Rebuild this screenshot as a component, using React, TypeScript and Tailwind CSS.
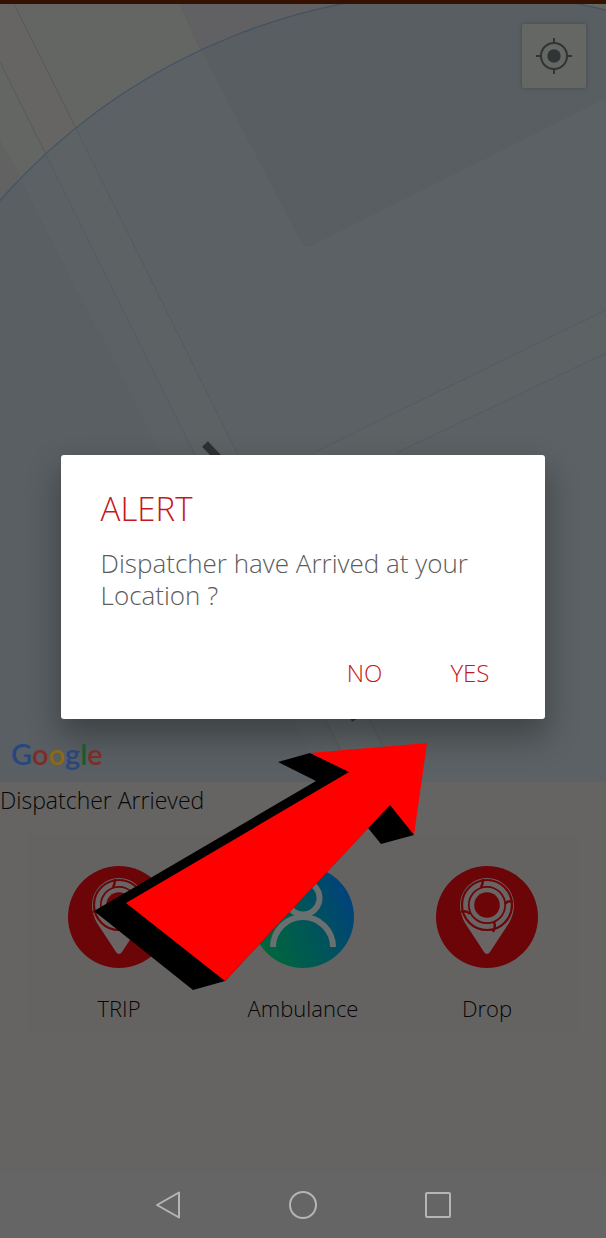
import type { ReactNode } from "react";

function MapCanvas() {
  return (
    <svg
      className="absolute inset-0 h-full w-full"
      viewBox="0 4 606 778"
      preserveAspectRatio="xMidYMin slice"
      aria-hidden="true"
    >
      <defs>
        <clipPath id="zone">
          <circle cx="460" cy="605" r="612.5" />
        </clipPath>
      </defs>
      <rect y="4" width="606" height="778" fill="#646663" />
      <path d="M180 4L201 50L380 4Z" fill="#616163" />
      <path d="M0 4H14L77 129L46 153L0 62Z" fill="#666564" />
      <path d="M0 140L20 175L0 210Z" fill="#636262" />
      <g clipPath="url(#zone)">
        <rect y="4" width="606" height="778" fill="#5b6164" />
        <path d="M0 140L148 428L325 782H0Z" fill="#595f63" />
        <path d="M180 4L201 50L301 242Q305 250 313 245L606 98V4Z" fill="#595e62" />
        <path d="M0 62L191 447L356 782H400L237 453L14 4H0Z" fill="#5d6365" />
        <path d="M606 310L313 453L200 510L290 510L398 452L606 353Z" fill="#5d6365" />
      </g>
      <g fill="none" stroke="#565b5d" strokeWidth="1">
        <path d="M0 62L191 447L356 782" />
        <path d="M14 4L237 453L400 782" />
        <path d="M606 310L313 453" />
        <path d="M606 353L398 452" />
      </g>
      <path d="M180 4L201 50" stroke="#5f5f60" />
      <circle cx="460" cy="605" r="612.5" fill="none" stroke="#435363" strokeWidth="1.3" />
      <path d="M205 444L222 462" stroke="#2d3132" strokeWidth="8" />
      <path d="M351 720L359 715" stroke="#2d3132" strokeWidth="4" />
    </svg>
  );
}

function LocateIcon() {
  return (
    <svg className="h-9 w-9" viewBox="0 0 36 36" fill="none" stroke="#303434" strokeWidth="2" aria-hidden="true">
      <circle cx="18" cy="18" r="13" />
      <circle cx="18" cy="18" r="6.7" fill="#303434" stroke="none" />
      <path d="M18 0V5M18 31V36M0 18H5M31 18H36" />
    </svg>
  );
}

function PinIcon() {
  return (
    <svg className="h-[102px] w-[102px]" viewBox="0 0 102 102" aria-hidden="true">
      <circle cx="51" cy="51" r="51" fill="#6b0507" />
      <path d="M24 39A27 27 0 0 1 78 39Q78 48 73 57L54 86Q51 90 48 86L29 57Q24 48 24 39Z" fill="#6a6464" />
      <g fill="none" stroke="#6b0507">
        <circle cx="51" cy="39" r="25" strokeWidth="2.2" />
        <circle cx="51" cy="39" r="18.2" strokeWidth="1.7" />
        <path
          strokeWidth="2.4"
          d="M47 13Q47 18 45 21.500M77 36Q72 34 69 38M57 66Q60 61 58 56M25 46Q30 44 34 48"
        />
      </g>
      <circle cx="51" cy="39" r="12.8" fill="#6b0507" />
    </svg>
  );
}

function PersonIcon() {
  return (
    <svg className="h-[102px] w-[102px]" viewBox="0 0 102 102" aria-hidden="true">
      <defs>
        <linearGradient id="person" x1="0" y1="0.8" x2="1" y2="0.35">
          <stop offset="0.1" stopColor="#00663d" />
          <stop offset="0.55" stopColor="#005558" />
          <stop offset="1" stopColor="#00427c" />
        </linearGradient>
      </defs>
      <circle cx="51" cy="51" r="51" fill="url(#person)" />
      <g fill="none" stroke="#6a6f6f" strokeWidth="6">
        <circle cx="51" cy="32" r="16.5" />
        <path d="M21 81A30 30 0 0 1 81 81" />
      </g>
    </svg>
  );
}

function Action({ icon, label }: { icon: ReactNode; label: string }) {
  return (
    <button type="button" className="flex flex-1 flex-col items-center gap-6 text-[22px] leading-8">
      {icon}
      <span>{label}</span>
    </button>
  );
}

function Arrow() {
  return (
    <svg
      className="pointer-events-none absolute left-[94px] top-[743px] z-20 h-[247px] w-[333px]"
      viewBox="94 743 333 247"
      aria-hidden="true"
    >
      <path d="M310 753L278 762L316 781L94 911L193 990L225 981L368 828L381 844L414 835L390 790Z" fill="#000" />
      <path d="M427 743L310 753L349 772L126 903L225 981L390 805L414 835Z" fill="#f00" />
    </svg>
  );
}

export default function App() {
  return (
    <div className="relative flex min-h-screen flex-col bg-[#656463] font-['Open_Sans','Noto_Sans',sans-serif] font-[340] text-[#060606]">
      <div className="h-1 bg-[#351100]" />

      <main className="flex flex-1 flex-col">
        <section aria-label="Map" className="relative flex flex-1 flex-col justify-between overflow-hidden bg-[#5b6164]">
          <MapCanvas />
          <button
            type="button"
            aria-label="My location"
            className="relative mr-5 mt-5 flex h-16 w-16 items-center justify-center self-end rounded-xs bg-[#656764] shadow-[0_0_4px_#45494b]"
          >
            <LocateIcon />
          </button>
          <div className="relative z-20 px-[11px] pb-2 font-['Lato',sans-serif] text-[29px] font-semibold leading-10">
            <span className="text-[#28467f]">G</span>
            <span className="text-[#7c2d28]">o</span>
            <span className="text-[#8a6a14]">o</span>
            <span className="text-[#28467f]">g</span>
            <span className="text-[#1b5a2e]">l</span>
            <span className="text-[#7c2d28]">e</span>
          </div>
        </section>

        <section className="pb-[142px]">
          <p className="text-[23px] leading-9">Dispatcher Arrieved</p>
          <div className="mx-[27px] mt-4 flex bg-[#656361] pb-2 pt-8">
            <Action icon={<PinIcon />} label="TRIP" />
            <Action icon={<PersonIcon />} label="Ambulance" />
            <Action icon={<PinIcon />} label="Drop" />
          </div>
        </section>
      </main>

      <nav aria-label="System" className="flex h-16 items-center justify-center gap-[105px] bg-[#656565]">
        <button type="button" aria-label="Back">
          <svg className="h-[30px] w-[30px]" viewBox="0 0 30 30" fill="none" stroke="#b5b5b5" strokeWidth="2" strokeLinejoin="round">
            <path d="M4 14L26 1.500V26.500Z" />
          </svg>
        </button>
        <button type="button" aria-label="Home">
          <svg className="h-[30px] w-[30px]" viewBox="0 0 30 30" fill="none" stroke="#b5b5b5" strokeWidth="2">
            <circle cx="15" cy="14" r="13" />
          </svg>
        </button>
        <button type="button" aria-label="Recents">
          <svg className="h-[30px] w-[30px]" viewBox="0 0 30 30" fill="none" stroke="#b5b5b5" strokeWidth="2">
            <rect x="3" y="2" width="24" height="24" rx="1" />
          </svg>
        </button>
      </nav>

      <div className="absolute inset-x-0 bottom-16 top-0 z-10 flex items-center justify-center">
        <div
          role="alertdialog"
          aria-modal="true"
          aria-labelledby="alert-title"
          aria-describedby="alert-text"
          className="w-4/5 rounded-[3px] bg-white px-10 pb-6 pt-8 shadow-[0_16px_32px_2px_rgba(0,0,0,0.3)]"
        >
          <h1 id="alert-title" className="text-[33px] leading-[44px] text-[#c3181c]">
            ALERT
          </h1>
          <p id="alert-text" className="mt-4 text-[26px] leading-8 text-[#5c5c5c]">
            Dispatcher have Arrived at your Location ?
          </p>
          <div className="mt-10 flex justify-end gap-9 text-[24px] leading-[44px] text-[#c3181c]">
            <button type="button" className="px-4">NO</button>
            <button type="button" className="px-4">YES</button>
          </div>
        </div>
      </div>

      <Arrow />
    </div>
  );
}
